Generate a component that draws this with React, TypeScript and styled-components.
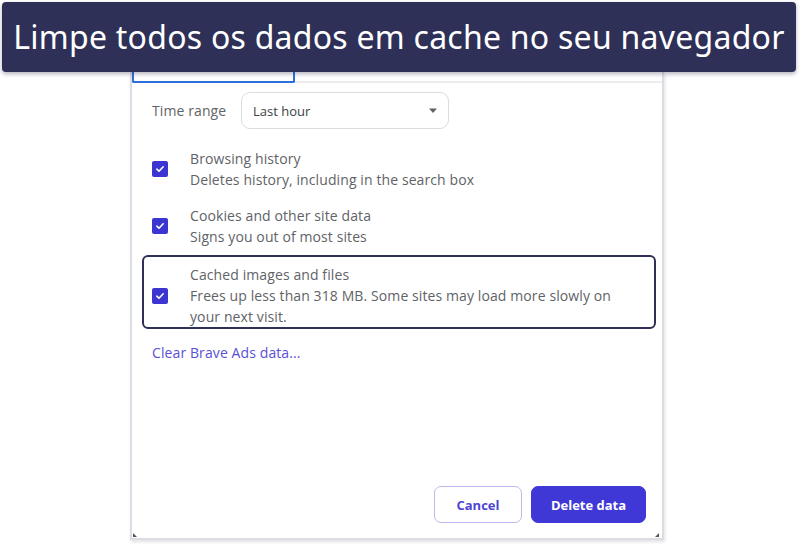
import styled, { createGlobalStyle } from 'styled-components';

const GlobalStyle = createGlobalStyle`
  html, body {
    margin: 0;
    padding: 0;
    background: #ffffff;
  }
  * {
    box-sizing: border-box;
  }
`;

interface Option {
  title: string;
  lines: string[];
  highlighted?: boolean;
}

const options: Option[] = [
  { title: 'Browsing history', lines: ['Deletes history, including in the search box'] },
  { title: 'Cookies and other site data', lines: ['Signs you out of most sites'] },
  {
    title: 'Cached images and files',
    lines: ['Frees up less than 318 MB. Some sites may load more slowly on', 'your next visit.'],
    highlighted: true,
  },
];

function CheckIcon() {
  return (
    <svg width='10' height='10' viewBox='0 0 10 10' fill='none'>
      <path d='M1.8 5.2 L4 7.2 L8.2 2.8' stroke='#ffffff' strokeWidth='1.6' strokeLinecap='round' strokeLinejoin='round' />
    </svg>
  );
}

function Caret() {
  return (
    <svg width='10' height='6' viewBox='0 0 10 6'>
      <path d='M1 0.5 L9 0.5 L5 5 Z' fill='#5f6368' />
    </svg>
  );
}

export default function App() {
  return (
    <Page>
      <GlobalStyle />
      <Banner>Limpe todos os dados em cache no seu navegador</Banner>

      <Dialog>
        <TabRow>
          <ActiveTab />
          <TabLine />
        </TabRow>

        <Body>
          <TimeRow>
            <Label>Time range</Label>
            <Select>
              <span>Last hour</span>
              <Caret />
            </Select>
          </TimeRow>

          <OptionList>
            {options.map((option) => (
              <OptionRow key={option.title} highlighted={option.highlighted}>
                <Checkbox>
                  <CheckIcon />
                </Checkbox>
                <OptionText>
                  <Line>{option.title}</Line>
                  {option.lines.map((line) => (
                    <Line key={line}>{line}</Line>
                  ))}
                </OptionText>
              </OptionRow>
            ))}
          </OptionList>

          <AdsLink>Clear Brave Ads data...</AdsLink>
        </Body>

        <Actions>
          <Button>Cancel</Button>
          <Button primary>Delete data</Button>
        </Actions>

        <Corner side='left' />
        <Corner side='right' />
      </Dialog>
    </Page>
  );
}

const Page = styled.div`
  width: 800px;
  height: 545px;
  overflow: hidden;
  background: #ffffff;
  font-family: 'Open Sans', 'Noto Sans', sans-serif;
`;

const Banner = styled.div`
  position: relative;
  z-index: 2;
  margin: 2px 4px 0 2px;
  height: 70px;
  background: #2e3057;
  border-radius: 4px;
  box-shadow: 0 2px 4px rgba(40, 40, 70, 0.35);
  color: #ffffff;
  font-family: 'Noto Sans', sans-serif;
  font-size: 32px;
  letter-spacing: 0.25px;
  display: flex;
  align-items: center;
  justify-content: center;
  padding-bottom: 2px;
`;

const Dialog = styled.div`
  position: relative;
  margin-left: 130px;
  width: 534px;
  height: 468px;
  background: #ffffff;
  border: 2px solid #dcdce4;
  border-top: none;
  box-shadow: 1px 2px 3px rgba(0, 0, 0, 0.12);
  display: flex;
  flex-direction: column;
`;

const TabRow = styled.div`
  display: flex;
  align-items: flex-end;
  height: 11px;
`;

const ActiveTab = styled.div`
  width: 163px;
  height: 100%;
  border: 2px solid #2f6fdc;
  border-top: none;
  border-radius: 0 0 2px 2px;
`;

const TabLine = styled.div`
  flex: 1;
  height: 2px;
  background: #ececf0;
`;

const Body = styled.div`
  padding: 9px 0 0 20px;
  display: flex;
  flex-direction: column;
  flex: 1;
`;

const TimeRow = styled.div`
  display: flex;
  align-items: center;
`;

const Label = styled.span`
  width: 89px;
  font-size: 14px;
  letter-spacing: 0.1px;
  color: #5f6368;
`;

const Select = styled.div`
  width: 208px;
  height: 37px;
  border: 1px solid #dadce0;
  border-radius: 9px;
  display: flex;
  align-items: center;
  justify-content: space-between;
  padding: 0 10px 0 11px;
  font-size: 13px;
  color: #3c4043;
`;

const OptionList = styled.div`
  margin-top: 19px;
  display: flex;
  flex-direction: column;
  gap: 15px;
`;

const OptionRow = styled.div<{ highlighted?: boolean }>`
  display: flex;
  align-items: center;
  gap: 22px;
  margin: ${({ highlighted }) => (highlighted ? '-7px 0 0 -10px' : '0')};
  width: ${({ highlighted }) => (highlighted ? '514px' : 'auto')};
  padding: ${({ highlighted }) => (highlighted ? '7px 0 0 8px' : '0')};
  border: ${({ highlighted }) => (highlighted ? '2px solid #2e3057' : 'none')};
  border-radius: 6px;
`;

const Checkbox = styled.div`
  width: 16px;
  height: 16px;
  flex: none;
  border-radius: 2px;
  background: #3d35d2;
  display: flex;
  align-items: center;
  justify-content: center;
`;

const OptionText = styled.div`
  display: flex;
  flex-direction: column;
`;

const Line = styled.span`
  font-size: 14px;
  letter-spacing: 0.1px;
  line-height: 21px;
  color: #5f6368;
  white-space: nowrap;
`;

const AdsLink = styled.span`
  margin-top: 13px;
  font-size: 14px;
  letter-spacing: 0.1px;
  line-height: 21px;
  color: #5a51d6;
`;

const Actions = styled.div`
  display: flex;
  justify-content: flex-end;
  gap: 9px;
  padding: 0 16px 15px 0;
`;

const Button = styled.button<{ primary?: boolean }>`
  height: 37px;
  padding: 0;
  width: ${({ primary }) => (primary ? '115px' : '88px')};
  border-radius: 7px;
  border: 1px solid ${({ primary }) => (primary ? '#3f38d6' : '#bcb8ee')};
  background: ${({ primary }) => (primary ? '#3f38d6' : '#ffffff')};
  color: ${({ primary }) => (primary ? '#ffffff' : '#4d45d0')};
  font-family: 'Open Sans', sans-serif;
  font-size: 13px;
  font-weight: 700;
`;

const Corner = styled.div<{ side: 'left' | 'right' }>`
  position: absolute;
  bottom: 1px;
  ${({ side }) => (side === 'left' ? 'left: 1px;' : 'right: 3px;')}
  width: 0;
  height: 0;
  border-style: solid;
  ${({ side }) =>
    side === 'left'
      ? 'border-width: 4px 0 0 4px; border-color: transparent transparent transparent #555;'
      : 'border-width: 0 0 4px 4px; border-color: transparent transparent #555 transparent;'}
`;
